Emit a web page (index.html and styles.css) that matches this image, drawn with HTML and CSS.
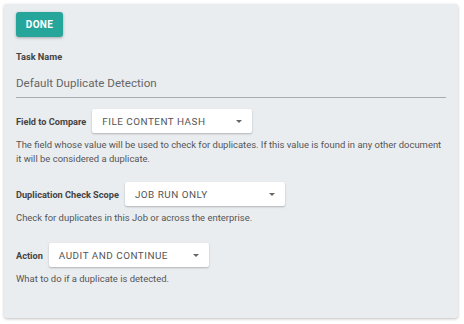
FILE: index.html
```html
<!DOCTYPE html>
<html lang="en">
<head>
  <meta charset="UTF-8" />
  <title>Duplicate Detection Task</title>
  <link rel="stylesheet" href="styles.css">
</head>
<body>
  <div class="card">
    <button class="done-btn">DONE</button>

    <div class="task-name">
      <label class="field-label">Task Name</label>
      <div class="text-input">Default Duplicate Detection</div>
    </div>

    <div class="option">
      <div class="option-row">
        <span class="field-label">Field to Compare</span>
        <div class="select">
          <span>FILE CONTENT HASH</span>
          <span class="caret"></span>
        </div>
      </div>
      <p class="help">The field whose value will be used to check for duplicates. If this value is found in any other document it will be considered a duplicate.</p>
    </div>

    <div class="option">
      <div class="option-row">
        <span class="field-label">Duplication Check Scope</span>
        <div class="select">
          <span>JOB RUN ONLY</span>
          <span class="caret"></span>
        </div>
      </div>
      <p class="help">Check for duplicates in this Job or across the enterprise.</p>
    </div>

    <div class="option">
      <div class="option-row">
        <span class="field-label">Action</span>
        <div class="select">
          <span>AUDIT AND CONTINUE</span>
          <span class="caret"></span>
        </div>
      </div>
      <p class="help">What to do if a duplicate is detected.</p>
    </div>
  </div>
</body>
</html>
```

FILE: styles.css
```css
body {
  margin: 0;
  padding: 4px;
  background-color: #fff;
  font-family: Roboto, "Liberation Sans", sans-serif;
}
.card {
  width: 454px;
  height: 314px;
  box-sizing: border-box;
  padding: 8px 12px;
  background-color: #eaedf0;
  border-radius: 3px;
  box-shadow: 0 1px 3px rgba(0, 0, 0, 0.25);
}
.done-btn {
  display: block;
  width: 47px;
  height: 25px;
  padding: 0;
  border: none;
  border-radius: 3px;
  background-color: #26a69a;
  color: #fff;
  font-family: inherit;
  font-size: 10px;
  font-weight: 700;
  letter-spacing: 0.3px;
  box-shadow: 0 1px 3px rgba(0, 0, 0, 0.3);
}
.field-label {
  font-size: 9.2px;
  font-weight: 700;
  color: #444;
}
.task-name {
  margin-top: 14px;
}
.task-name .field-label {
  display: block;
  line-height: 12px;
}
.text-input {
  margin-top: 13px;
  padding-bottom: 7px;
  font-size: 11.6px;
  line-height: 14px;
  color: #666;
  border-bottom: 1px solid #a8abae;
}
.option {
  margin-top: 11px;
}
.option + .option {
  margin-top: 16px;
}
.option:last-child {
  margin-top: 18px;
}
.option-row {
  display: flex;
  align-items: center;
  gap: 6px;
}
.select {
  width: 160px;
  height: 24px;
  box-sizing: border-box;
  padding: 0 10px;
  display: flex;
  align-items: center;
  justify-content: space-between;
  background-color: #fff;
  border-radius: 2px;
  box-shadow: 0 1px 2px rgba(0, 0, 0, 0.25);
  font-size: 9.9px;
  letter-spacing: 0.5px;
  color: #555;
}
.caret {
  width: 0;
  height: 0;
  border-left: 3px solid transparent;
  border-right: 3px solid transparent;
  border-top: 3px solid #666;
}
.help {
  margin: 5px 0 0;
  font-size: 9.45px;
  line-height: 14px;
  color: #555;
}
```
